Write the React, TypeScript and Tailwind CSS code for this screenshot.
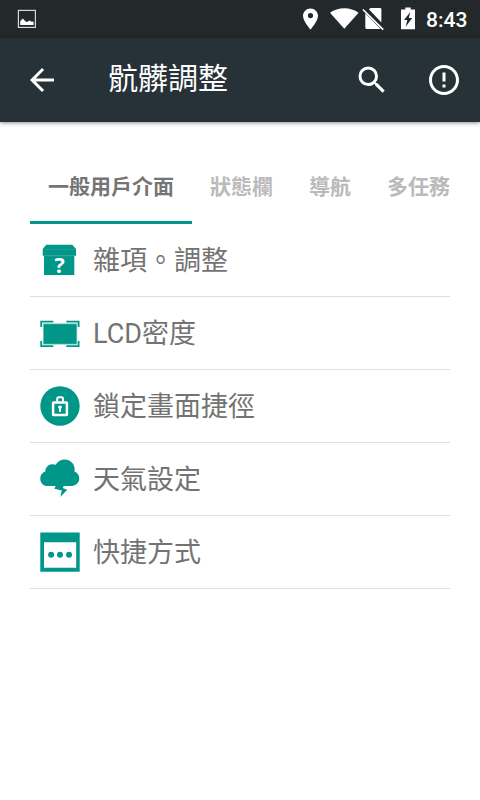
import type { ReactNode } from "react"

const teal = "#009688"

const tabs = ["一般用戶介面", "狀態欄", "導航", "多任務"]

function BoxIcon() {
  return (
    <svg width="40" height="40" viewBox="0 0 40 40">
      <path d="M6.3 4.7H32.3L36 9V15.7H2.7V9Z" fill={teal} />
      <path d="M4 15.5H34.3V35H4Z" fill={teal} />
      <path d="M5 9.6H34M4 15.9H34.5" stroke="#4db6ac" strokeWidth="0.4" />
      <text x="19.6" y="33.2" textAnchor="middle" fill="#fff" fontFamily="Open Sans" fontWeight="700" fontSize="21.5">
        ?
      </text>
    </svg>
  )
}

function DensityIcon() {
  return (
    <svg width="40" height="40" viewBox="0 0 40 40">
      <rect x="3" y="10.4" width="34.2" height="21.2" fill="#80cbc4" />
      <rect x="3.8" y="11.2" width="32.6" height="19.6" fill={teal} />
      <path
        d="M1.2 14V8.6H13.3M26.3 8.6H38.6V14M38.6 28V33.2H26.3M13.3 33.2H1.2V28"
        fill="none"
        stroke={teal}
        strokeWidth="1.8"
      />
    </svg>
  )
}

function LockIcon() {
  return (
    <svg width="40" height="40" viewBox="0 0 40 40">
      <circle cx="20" cy="20" r="19.7" fill={teal} />
      <rect x="13.1" y="16.5" width="13.8" height="12.6" rx="0.6" fill="none" stroke="#fff" strokeWidth="2.5" />
      <path d="M17.2 15.5V12.8Q17.2 11.3 18.7 11.3H21.5Q23 11.3 23 12.8V15.5" fill="none" stroke="#fff" strokeWidth="2" />
      <path d="M18.3 19.8H21.7V22.3H21V25.7H19V22.3H18.3Z" fill="#fff" />
    </svg>
  )
}

function WeatherIcon() {
  return (
    <svg width="40" height="40" viewBox="0 0 40 40">
      <path
        d="M6.5 27C2.8 26.6.3 23.5.3 19.8C.3 16.3 2.4 13.5 5.3 12.6C5.4 8.4 8.3 5.3 12.2 5.2C13.5 5.1 14.8 5.3 15.8 5.8C17.5 2.4 20.8.4 24.7.4C30.4.4 34.7 4.8 34.7 10.3C34.7 11 34.6 11.8 34.4 12.5C37.4 13.6 39.3 16.3 39.3 19.3C39.3 23.4 36.5 26.2 32.5 27Z"
        fill={teal}
      />
      <path d="M15.7 27L14.3 29.8L21.8 31.4L20.3 38L27.2 30.8L22.7 29L23.8 27Z" fill={teal} />
    </svg>
  )
}

function ShortcutIcon() {
  return (
    <svg width="40" height="40" viewBox="0 0 40 40">
      <path d="M.3.6H39.7V39.7H.3ZM4 10.2V35.8H36.2V10.2Z" fill={teal} fillRule="evenodd" />
      <circle cx="11.1" cy="22.8" r="3" fill={teal} />
      <circle cx="20" cy="22.8" r="3" fill={teal} />
      <circle cx="29" cy="22.8" r="3" fill={teal} />
    </svg>
  )
}

const items: { label: string; icon: ReactNode }[] = [
  { label: "雜項。調整", icon: <BoxIcon /> },
  { label: "LCD密度", icon: <DensityIcon /> },
  { label: "鎖定畫面捷徑", icon: <LockIcon /> },
  { label: "天氣設定", icon: <WeatherIcon /> },
  { label: "快捷方式", icon: <ShortcutIcon /> },
]

function StatusBar() {
  return (
    <div className="flex h-[38px] items-center bg-[#23282b] pl-[17px] pr-3 text-white">
      {/* Screenshot notification */}
      <svg width="20" height="20" viewBox="0 0 20 20">
        <rect x="1.4" y="1.4" width="17" height="17" fill="none" stroke="#d5d7d8" strokeWidth="1.2" />
        <path d="M3.2 16V12.2L5.8 9.5L8.6 12.5L10 13L12.5 11.5L14 12.5L16.6 12.8V16Z" fill="#fff" />
      </svg>
      <div className="ml-auto flex items-center">
        {/* Location */}
        <svg width="16" height="22" viewBox="0 0 16 22">
          <path
            d="M7.5 0.4C3.4.4 0 3.7 0 7.8C0 13.2 7.5 21.6 7.5 21.6S15 13.2 15 7.8C15 3.7 11.6.4 7.5.4ZM7.5 10.2A2.6 2.6 0 1 1 7.5 5A2.6 2.6 0 0 1 7.5 10.2Z"
            fill="#fff"
          />
        </svg>
        {/* Wifi */}
        <svg className="ml-[11px]" width="29" height="22" viewBox="0 0 29 22">
          <path d="M0 4.8C4 1.8 9 .3 14.3.3S24.6 1.8 28.6 4.8L14.3 20.8Z" fill="#fff" />
        </svg>
        {/* No SIM */}
        <svg className="ml-[3px]" width="24" height="24" viewBox="0 0 24 24">
          <path d="M6.9 2.3L8.5 1.1H18Q19.4 1.1 19.4 2.5V15.4Z" fill="#fff" />
          <path d="M3.3 6.2L18.6 22H4.9Q3.3 22 3.3 20.4Z" fill="#fff" />
          <path d="M.9 2.5L21.2 22.7" stroke="#fff" strokeWidth="1.7" />
        </svg>
        {/* Battery charging */}
        <svg className="ml-[14px]" width="16" height="24" viewBox="0 0 16 24">
          <path d="M5.3 .4H10.7V2.4H15V22.2H1V2.4H5.3ZM10.3 5L4 13H7.3L5.7 19.8L12.2 11H8.8Z" fill="#fff" fillRule="evenodd" />
        </svg>
        <span className="ml-[10px] w-[42px] pt-0.5 text-[21px] leading-none font-medium whitespace-nowrap">8:43</span>
      </div>
    </div>
  )
}

function Toolbar() {
  return (
    <header className="flex h-[84px] items-center bg-[#263238] pl-6 text-white shadow-[0_1px_4px_rgba(0,0,0,0.45)]">
      <svg width="36" height="36" viewBox="0 0 24 24">
        <path d="M20 11H7.8l5.6-5.6L12 4l-8 8 8 8 1.4-1.4L7.8 13H20Z" fill="#fff" />
      </svg>
      <h1 className="ml-[48px] pb-0.5 text-[30px] leading-none font-normal">骯髒調整</h1>
      <svg className="ml-auto" width="36" height="36" viewBox="0 0 24 24">
        <path
          d="M15.5 14h-.79l-.28-.27A6.47 6.47 0 0 0 16 9.5 6.5 6.5 0 1 0 9.5 16c1.61 0 3.09-.59 4.23-1.57l.27.28v.79l5 4.99L20.49 19zm-6 0C7.01 14 5 11.99 5 9.5S7.01 5 9.5 5 14 7.01 14 9.5 11.99 14 9.5 14"
          fill="#fff"
        />
      </svg>
      <svg className="ml-9 mr-[18px]" width="36" height="36" viewBox="0 0 24 24">
        <path
          d="M11 15h2v2h-2zm0-8h2v6h-2zm.99-5C6.47 2 2 6.48 2 12s4.47 10 9.99 10C17.52 22 22 17.52 22 12S17.52 2 11.99 2M12 20c-4.42 0-8-3.58-8-8s3.58-8 8-8 8 3.58 8 8-3.58 8-8 8"
          fill="#fff"
        />
      </svg>
    </header>
  )
}

export default function App() {
  return (
    <div className="h-[800px] w-[480px] overflow-hidden bg-white font-[Roboto,'Noto_Sans_CJK_TC',sans-serif]">
      <StatusBar />
      <Toolbar />
      <main className="px-[30px] pt-[30px]">
        <nav className="flex h-[72px] overflow-hidden">
          {tabs.map((tab, i) => (
            <div
              key={tab}
              className={
                i === 0
                  ? "flex shrink-0 items-center border-b-3 border-[#009688] px-[18px] pt-0.5 text-[21px] font-bold text-[#757575]"
                  : "flex shrink-0 items-center border-b-3 border-transparent px-[18px] pt-0.5 text-[21px] font-bold text-[#bababa]"
              }
            >
              {tab}
            </div>
          ))}
        </nav>
        <ul>
          {items.map((item) => (
            <li key={item.label} className="flex h-[73px] items-center border-b border-[#dedede] pl-[10px]">
              {item.icon}
              <span className="ml-[13px] pt-0.5 text-[27px] leading-none text-[#737373]">{item.label}</span>
            </li>
          ))}
        </ul>
      </main>
    </div>
  )
}
